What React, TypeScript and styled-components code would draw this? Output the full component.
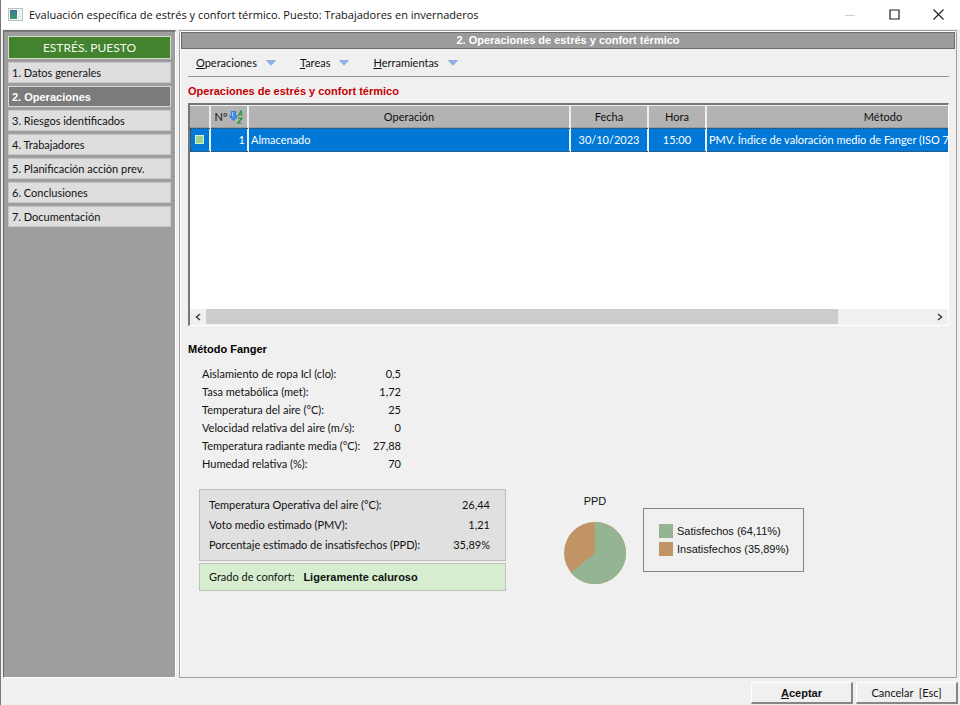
import React from "react";
import styled, { createGlobalStyle } from "styled-components";

const boldFont = `"Liberation Sans", Arial, sans-serif`;

const GlobalStyle = createGlobalStyle`
  * { box-sizing: border-box; }
  body {
    margin: 0;
    background: #f0f0f0;
    color: #111;
    font: 11px/14px Lato, "Liberation Sans", sans-serif;
  }
  button { font: inherit; color: inherit; padding: 0; border: 0; background: none; }
  strong { font-family: ${boldFont}; }
  svg { display: block; }
`;

const Window = styled.div`
  display: flex;
  flex-direction: column;
  min-height: 100vh;
  border-left: 1px solid #777;
`;

const TitleBar = styled.header`
  display: flex;
  align-items: center;
  height: 29px;
  padding-left: 7px;
  background: #fff;
  color: #111;
`;

const WindowTitle = styled.h1`
  flex: 1;
  margin: 0 0 0 6px;
  font: 400 11px/16px "Open Sans", "Noto Sans", sans-serif;
  white-space: nowrap;
`;

const CaptionButton = styled.button`
  display: flex;
  align-items: center;
  justify-content: center;
  width: 44px;
  height: 28px;
`;

const Body = styled.div`
  flex: 1;
  display: flex;
  gap: 3px;
  padding: 1px 3px 0 2px;
`;

const Sidebar = styled.nav`
  display: flex;
  flex-direction: column;
  gap: 3px;
  flex: 0 0 173px;
  padding: 4px;
  background: #9e9e9e;
  border: 1px solid #fff;
  border-top: 2px solid #777;
  border-left: 1px solid #696969;
`;

const SidebarHeading = styled.h2`
  margin: 0;
  height: 23px;
  border: 1px solid #d4dcd0;
  background: #43832d;
  color: #f4f8f2;
  font-size: 12px;
  font-weight: 400;
  line-height: 21px;
  text-align: center;
`;

const SidebarItem = styled.button<{ $active?: boolean }>`
  height: 21px;
  padding-left: 3px;
  border: 1px solid ${(p) => (p.$active ? "#d8d8d8" : "#c8c8c8")};
  background: ${(p) => (p.$active ? "#7b7b7b" : "#dedede")};
  color: ${(p) => (p.$active ? "#fff" : "#111")};
  font-family: ${(p) => (p.$active ? boldFont : "inherit")};
  font-weight: ${(p) => (p.$active ? 700 : 400)};
  line-height: 18px;
  text-align: left;
  white-space: nowrap;
`;

const Panel = styled.main`
  flex: 1;
  min-width: 0;
  padding: 1px;
  border: 1px solid #a0a0a0;
  box-shadow: inset 1px 1px #fff;
`;

const PanelHeading = styled.h2`
  margin: 0;
  height: 17px;
  border: 1px solid #6c6c6c;
  background: #9b9b9b;
  color: #fff;
  font: 700 11px/14px ${boldFont};
  text-align: center;
`;

const Content = styled.div`
  padding: 0 6px 0 7px;
`;

const MenuBar = styled.div`
  display: flex;
  gap: 24px;
  height: 28px;
  padding-left: 8px;
  border-bottom: 1px solid #979797;
`;

const MenuButton = styled.button`
  display: flex;
  align-items: center;
  gap: 9px;
`;

const SectionTitle = styled.h3<{ $accent?: boolean }>`
  margin: 0;
  font: 700 11px/14px ${boldFont};
  color: ${(p) => (p.$accent ? "#c40000" : "#000")};
  padding: ${(p) => (p.$accent ? "7px 0 5px" : "16px 0 9px")};
`;

const Grid = styled.div`
  display: flex;
  flex-direction: column;
  height: 223px;
  overflow: hidden;
  background: #fff;
  border: 2px solid #777;
  border-right: 1px solid #fff;
  border-bottom: 1px solid #fff;
`;

const GridViewport = styled.div`
  flex: 1;
  overflow: hidden;
`;

const Table = styled.table`
  width: 871px;
  min-width: 100%;
  table-layout: fixed;
  border-collapse: collapse;
`;

const Col = styled.col<{ $width?: number }>`
  width: ${(p) => (p.$width ? `${p.$width}px` : "auto")};
`;

const HeadCell = styled.th`
  height: 22px;
  padding: 0;
  background: #b3b3b3;
  border-top: 1px solid #eee;
  border-right: 2px solid #eee;
  border-bottom: 1px solid #999;
  font-weight: 400;
`;

const SortLabel = styled.span`
  display: flex;
  align-items: center;
  justify-content: center;
  gap: 2px;
`;

const SelectedRow = styled.tr`
  background: #0078d7;
  color: #fff;
  outline: 1px dotted #444;
  outline-offset: -1px;
`;

const Cell = styled.td<{ $align?: string }>`
  height: 24px;
  padding: 0 2px;
  border-right: 2px solid #e8f0f8;
  text-align: ${(p) => p.$align || "left"};
  white-space: nowrap;
`;

const Marker = styled.span`
  display: block;
  width: 9px;
  height: 9px;
  margin: 0 auto;
  background: #9bd38f;
  border: 1px solid #d7efcf;
`;

const ScrollBar = styled.div`
  display: flex;
  height: 16px;
  background: #f0f0f0;
`;

const ScrollButton = styled.button`
  display: flex;
  align-items: center;
  justify-content: center;
  width: 16px;
`;

const ScrollTrack = styled.div`
  flex: 1;
`;

const ScrollThumb = styled.div`
  width: 87%;
  height: 15px;
  background: #cdcdcd;
`;

const Parameters = styled.dl`
  display: grid;
  grid-template-columns: 156px 43px;
  margin: 0 0 16px 14px;
  line-height: 18px;
`;

const Term = styled.dt`
  white-space: nowrap;
`;

const Value = styled.dd`
  margin: 0;
  text-align: right;
`;

const Results = styled.div`
  display: flex;
  align-items: flex-start;
  padding-left: 11px;
`;

const Summary = styled.div`
  display: flex;
  flex-direction: column;
  gap: 2px;
  width: 307px;
`;

const SummaryList = styled.dl`
  display: grid;
  grid-template-columns: 1fr auto;
  margin: 0;
  padding: 5px 15px 5px 9px;
  border: 1px solid #bdbdbd;
  background: #e0e0e0;
  line-height: 20px;
`;

const Comfort = styled.p`
  display: flex;
  align-items: baseline;
  gap: 9px;
  margin: 0;
  padding: 0 9px;
  border: 1px solid #bdc5b9;
  background: #d6eecf;
  line-height: 26px;
`;

const Chart = styled.figure`
  display: flex;
  flex-direction: column;
  align-items: center;
  gap: 14px;
  width: 62px;
  margin: 5px 0 0 58px;
  font-family: "Liberation Sans", Arial, sans-serif;
`;

const Legend = styled.ul`
  display: grid;
  gap: 4px;
  width: 161px;
  margin: 19px 0 0 17px;
  padding: 15px 15px 15px 15px;
  border: 1px solid #858585;
  list-style: none;
  font-family: "Liberation Sans", Arial, sans-serif;
`;

const LegendItem = styled.li`
  display: flex;
  align-items: center;
  gap: 4px;
  white-space: nowrap;
`;

const Swatch = styled.span<{ $color: string }>`
  flex: none;
  width: 14px;
  height: 14px;
  background: ${(p) => p.$color};
`;

const Footer = styled.footer`
  display: flex;
  justify-content: flex-end;
  gap: 3px;
  padding: 4px 2px 1px;
`;

const DialogButton = styled.button<{ $primary?: boolean }>`
  width: 102px;
  height: 22px;
  border: 1px solid #fff;
  border-right: 2px solid #858585;
  border-bottom: 2px solid #858585;
  background: #f0f0f0;
  font-family: ${(p) => (p.$primary ? boldFont : "inherit")};
  font-weight: ${(p) => (p.$primary ? 700 : 400)};
`;

const AppIcon = () => (
  <svg width="15" height="13" viewBox="0 0 15 13">
    <defs>
      <linearGradient id="appPane" x1="0" y1="0" x2="0" y2="1">
        <stop offset="0" stopColor="#3c6f96" />
        <stop offset="1" stopColor="#3f9a6b" />
      </linearGradient>
    </defs>
    <rect x=".5" y=".5" width="14" height="12" fill="#f4f6f6" stroke="#b9c0c2" />
    <rect x="2" y="2" width="7" height="9" fill="url(#appPane)" />
    <path d="M10 3h3M10 6h3M10 9h3" stroke="#d3dada" />
  </svg>
);

const DropArrow = () => (
  <svg width="10" height="6" viewBox="0 0 10 6">
    <path d="M.5.5h9L5 5.2z" fill="#8fb0ea" stroke="#6c97e0" strokeWidth=".6" />
  </svg>
);

const SortIcon = () => (
  <svg width="14" height="14" viewBox="0 0 14 14">
    <path d="M2.500 1.500h4V6h2L4.500 10.800.5 6h2z" fill="#3b93ee" stroke="#1f6fc9" strokeWidth=".7" />
    <path d="M3.600 2.200v4" stroke="#a9d6ff" />
    <path d="M9.200 6 12 .8 13 6M10 4.300h2.600M9 8.400h4L8.600 13h3.800" fill="none" stroke="#169a2c" strokeWidth="1.100" />
  </svg>
);

const Chevron = ({ flip = false }: { flip?: boolean }) => (
  <svg width="6" height="8" viewBox="0 0 6 8">
    <path d={flip ? "M1 1l3.5 3L1 7" : "M5 1L1.5 4 5 7"} fill="none" stroke="#444" strokeWidth="1.6" />
  </svg>
);

const slices = [
  { label: "Satisfechos", value: 64.11, text: "64,11%", color: "#95b493" },
  { label: "Insatisfechos", value: 35.89, text: "35,89%", color: "#c19466" },
];

const Pie = () => {
  const angle = (slices[0].value / 100) * Math.PI * 2;
  const x = 31 + 31 * Math.sin(angle);
  const y = 31 - 31 * Math.cos(angle);
  return (
    <svg width="62" height="62" viewBox="0 0 62 62" role="img" aria-label="PPD">
      <circle cx="31" cy="31" r="31" fill={slices[1].color} />
      <path d={`M31 31V0A31 31 0 1 1 ${x} ${y}Z`} fill={slices[0].color} />
    </svg>
  );
};

const sections = [
  "Datos generales",
  "Operaciones",
  "Riesgos identificados",
  "Trabajadores",
  "Planificación acción prev.",
  "Conclusiones",
  "Documentación",
];

const menus = ["Operaciones", "Tareas", "Herramientas"];

const parameters = [
  ["Aislamiento de ropa Icl (clo):", "0,5"],
  ["Tasa metabólica (met):", "1,72"],
  ["Temperatura del aire (°C):", "25"],
  ["Velocidad relativa del aire (m/s):", "0"],
  ["Temperatura radiante media (°C):", "27,88"],
  ["Humedad relativa (%):", "70"],
];

const results = [
  ["Temperatura Operativa del aire (°C):", "26,44"],
  ["Voto medio estimado (PMV):", "1,21"],
  ["Porcentaje estimado de insatisfechos (PPD):", "35,89%"],
];

export default function App() {
  return (
    <>
      <GlobalStyle />
      <Window>
        <TitleBar>
          <AppIcon />
          <WindowTitle>
            Evaluación específica de estrés y confort térmico. Puesto: Trabajadores en invernaderos
          </WindowTitle>
          <CaptionButton aria-label="Minimizar" disabled>
            <svg width="10" height="10"><path d="M0 5.5h10" stroke="#d0d0d0" /></svg>
          </CaptionButton>
          <CaptionButton aria-label="Maximizar">
            <svg width="11" height="11"><path d="M1 1h9v9H1z" fill="none" stroke="#222" strokeWidth="1.2" /></svg>
          </CaptionButton>
          <CaptionButton aria-label="Cerrar">
            <svg width="11" height="11"><path d="M.5.5l10 10M10.5.5l-10 10" fill="none" stroke="#222" strokeWidth="1.2" /></svg>
          </CaptionButton>
        </TitleBar>

        <Body>
          <Sidebar>
            <SidebarHeading>ESTRÉS. PUESTO</SidebarHeading>
            {sections.map((name, i) => (
              <SidebarItem key={name} $active={i === 1}>{`${i + 1}. ${name}`}</SidebarItem>
            ))}
          </Sidebar>

          <Panel>
            <PanelHeading>2. Operaciones de estrés y confort térmico</PanelHeading>
            <Content>
              <MenuBar>
                {menus.map((name) => (
                  <MenuButton key={name}>
                    <span><u>{name[0]}</u>{name.slice(1)}</span>
                    <DropArrow />
                  </MenuButton>
                ))}
              </MenuBar>
              <SectionTitle $accent>Operaciones de estrés y confort térmico</SectionTitle>

              <Grid>
                <GridViewport>
                  <Table>
                    <colgroup>
                      <Col $width={20} />
                      <Col $width={38} />
                      <Col $width={322} />
                      <Col $width={78} />
                      <Col $width={58} />
                      <Col />
                    </colgroup>
                    <thead>
                      <tr>
                        <HeadCell aria-label="Estado" />
                        <HeadCell><SortLabel>Nº<SortIcon /></SortLabel></HeadCell>
                        <HeadCell>Operación</HeadCell>
                        <HeadCell>Fecha</HeadCell>
                        <HeadCell>Hora</HeadCell>
                        <HeadCell>Método</HeadCell>
                      </tr>
                    </thead>
                    <tbody>
                      <SelectedRow>
                        <Cell><Marker /></Cell>
                        <Cell $align="right">1</Cell>
                        <Cell>Almacenado</Cell>
                        <Cell $align="center">30/10/2023</Cell>
                        <Cell $align="center">15:00</Cell>
                        <Cell>PMV. Índice de valoración medio de Fanger (ISO 77</Cell>
                      </SelectedRow>
                    </tbody>
                  </Table>
                </GridViewport>
                <ScrollBar>
                  <ScrollButton aria-label="Desplazar a la izquierda"><Chevron /></ScrollButton>
                  <ScrollTrack><ScrollThumb /></ScrollTrack>
                  <ScrollButton aria-label="Desplazar a la derecha"><Chevron flip /></ScrollButton>
                </ScrollBar>
              </Grid>

              <SectionTitle>Método Fanger</SectionTitle>
              <Parameters>
                {parameters.map(([name, value]) => (
                  <React.Fragment key={name}>
                    <Term>{name}</Term>
                    <Value>{value}</Value>
                  </React.Fragment>
                ))}
              </Parameters>

              <Results>
                <Summary>
                  <SummaryList>
                    {results.map(([name, value]) => (
                      <React.Fragment key={name}>
                        <Term>{name}</Term>
                        <Value>{value}</Value>
                      </React.Fragment>
                    ))}
                  </SummaryList>
                  <Comfort>
                    <span>Grado de confort:</span>
                    <strong>Ligeramente caluroso</strong>
                  </Comfort>
                </Summary>
                <Chart>
                  <figcaption>PPD</figcaption>
                  <Pie />
                </Chart>
                <Legend>
                  {slices.map((s) => (
                    <LegendItem key={s.label}>
                      <Swatch $color={s.color} />
                      {`${s.label} (${s.text})`}
                    </LegendItem>
                  ))}
                </Legend>
              </Results>
            </Content>
          </Panel>
        </Body>

        <Footer>
          <DialogButton $primary><u>A</u>ceptar</DialogButton>
          <DialogButton>Cancelar&nbsp; [Esc]</DialogButton>
        </Footer>
      </Window>
    </>
  );
}
